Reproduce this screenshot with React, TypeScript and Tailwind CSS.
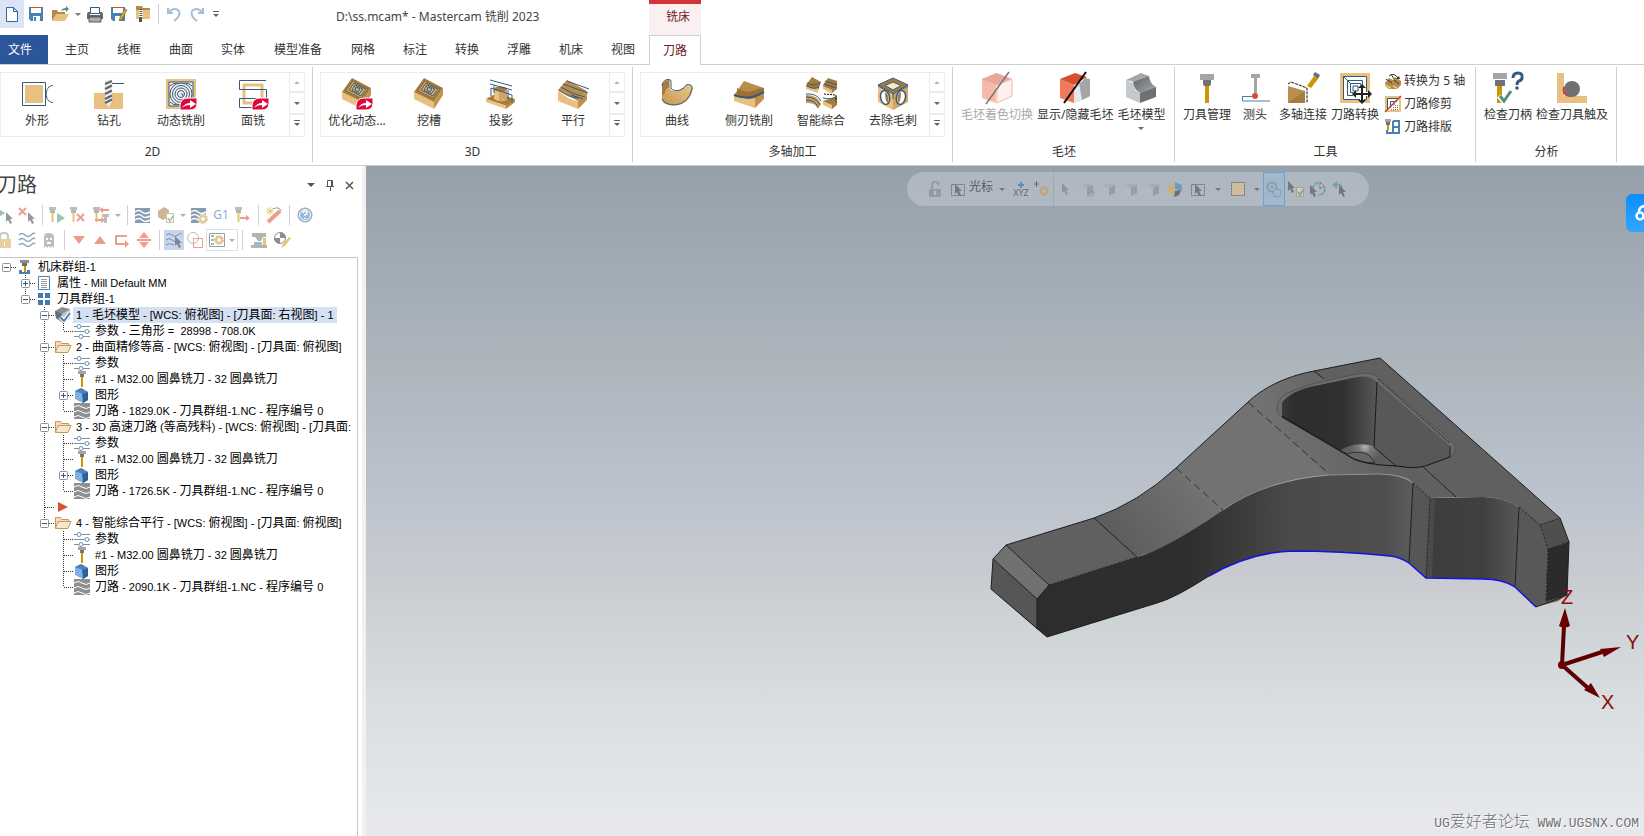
import type { ReactNode } from 'react';
import clsx from 'clsx';

const NAVY = '#34597f';
const TAN = '#e8c080';
const BROWN = '#a67c3d';

interface SvgProps {
  size?: number;
  className?: string;
  children: ReactNode;
}

function Svg({ size = 16, className, children }: SvgProps) {
  return (
    <svg
      width={size}
      height={size}
      viewBox={`0 0 ${size} ${size}`}
      fill="none"
      aria-hidden="true"
      className={clsx('shrink-0 overflow-visible', className)}
    >
      {children}
    </svg>
  );
}

function Caret({ className }: { className?: string }) {
  return (
    <svg width="6" height="3" viewBox="0 0 6 3" aria-hidden="true" className={clsx('shrink-0', className)}>
      <path d="M0 0h6L3 3z" fill="currentColor" />
    </svg>
  );
}

// latin runs are set one size below the CJK ones
function Mixed({ text, latin }: { text: string; latin: string }) {
  const parts = text.split(/([\u4e00-\u9fff]+)/).filter(Boolean);
  return (
    <>
      {parts.map((p, i) => (/[\u4e00-\u9fff]/.test(p) ? p : <span key={i} className={latin}>{p}</span>))}
    </>
  );
}

/* ---------- ribbon icons, 32px ---------- */

const Badge = () => (
  <g>
    <path d="M15 33v-5q1-7 8-7h9v6q-1 6-7 6z" fill="#e0063c" stroke="#fff" strokeWidth="1" />
    <path d="M17 31q3-5 8-5v-3l6 4-6 4v-3q-5 0-8 3z" fill="#fff" />
  </g>
);

const PocketBlock = () => (
  <g>
    <path d="M1 15 21 25v7L1 22z" fill={TAN} />
    <path d="M30 11v7l-9 14v-7z" fill="#c0924c" />
    <path d="M11 1 30 11 21 25 1 15z" fill={BROWN} />
    <path d="M12 4 27 12 20 21 5 14z" fill="#d9b06c" stroke="#8a6631" />
    <path d="M13 6 25 12 20 19 8 13zM14 8l8 4-4 5-7-4zM15 10l4 2-2 3-3-2z" stroke={NAVY} />
  </g>
);

const ICONS: Record<string, ReactNode> = {
  contour: (
    <>
      <path d="M1.500 5.500h23v23h-23z" stroke={NAVY} />
      <path d="M4 8h18v18H4z" fill={TAN} />
      <path d="M32 8.500c-9 0-9 17 0 17" stroke={NAVY} />
    </>
  ),
  drill: (
    <>
      <path d="M1 16h29v16H1z" fill={TAN} />
      <path d="M12 3h7v22l-3.500 5-3.500-5z" fill="#e9eaea" />
      <path d="M12 7l7-3M12 12l7-3.500M12 17l7-3.500M12 22l7-3.500M12 26l7-3.500" stroke="#5f6468" strokeWidth="2" />
      <path d="M19 6.500h12" stroke={NAVY} />
    </>
  ),
  dynamic: (
    <>
      <path d="M1 2h30v30H1z" fill={TAN} />
      <path d="M4 5h24v24H4z" fill="#f3f0ea" stroke={NAVY} />
      <g stroke={NAVY}>
        <circle cx="16" cy="17" r="11" />
        <circle cx="16" cy="17" r="8.500" />
        <circle cx="16" cy="17" r="6" />
        <circle cx="16" cy="17" r="3.500" />
        <path d="M16 17q2-1 2 2M5 9q3-3 7-3M27 9q-3-3-7-3M5 25q3 3 7 3" />
      </g>
      <Badge />
    </>
  ),
  face: (
    <>
      <path d="M7 8h18v18H7z" stroke={TAN} strokeWidth="3" />
      <path d="M29 3.500H2.500v9h27v9H2.500v9H16" stroke={NAVY} />
      <Badge />
    </>
  ),
  optirough: (
    <>
      <PocketBlock />
      <Badge />
    </>
  ),
  pocket: <PocketBlock />,
  project: (
    <>
      <path d="M1 22 12 16l18 6-8 7z" fill={BROWN} />
      <path d="M1 22l20 7v3L1 25z" fill={TAN} />
      <path d="M21 29l9-7v3l-9 7z" fill="#b88a45" />
      <path d="M9 13v9q6 4 13 1V13z" fill={TAN} />
      <path d="M14 13v11l8-1V13z" fill="#d0a562" />
      <ellipse cx="15.500" cy="12" rx="6.500" ry="2.500" fill={BROWN} />
      <path d="M5 3l22 6M5 7l22 6M6 11l21 7v8M6 11v8M9 9v7M23 13v9" stroke={NAVY} />
    </>
  ),
  parallel: (
    <>
      <path d="M1 13 10 3l20 11-9 10z" fill="#b98d4a" />
      <path d="M1 13q11 11 20 11v8L1 24z" fill={TAN} />
      <path d="M30 14v9l-9 9v-8z" fill="#c0924c" />
      <path d="M10 4l22 8M6 7l25 9M4 10q12 8 24 10M2 13q10 8 20 8M14 18l12 4" stroke={NAVY} />
    </>
  ),
  curve: (
    <>
      <path d="M1 9q1-6 8-6v8q2 5 10 2 6-3 7-5 6-2 6 4-3 15-17 16-14 1-14-6z" fill="url(#tanFade)" />
      <path d="M1 9q2-6 7-6v7q-4 2-4 6l-3 3z" fill={BROWN} />
      <path d="M1 9q1-7 7-6.500 2 0 2 2V11q3 4 9 2 5-2 6-5 6-2 6 4-4 15-17 16-10 0-13-6" stroke={NAVY} />
    </>
  ),
  swarf: (
    <>
      <path d="M1 18 11 4l20 7-9 12z" fill="#b98d4a" />
      <path d="M4 11q10 7 21 1l6-1v9q-14 6-27-2z" fill="#9a7135" />
      <path d="M1 18q12 6 21 3v10L1 24z" fill={TAN} />
      <path d="M31 15v7l-9 9V21z" fill="#c0924c" />
      <path d="M1 18q14 6 30-3" stroke={NAVY} strokeWidth="2" />
    </>
  ),
  unified: (
    <>
      <path d="M1 8 7 0l9 5-3 9-12-3zM18 8l5-7 9 3v8l-5 4-9-5z" fill={BROWN} />
      <path d="M1 9q7 4 12 2v5L1 12zM18 9l9 4v4l-9-5z" fill={TAN} />
      <path d="M1 18q12 0 15 9l-3 5q-3-7-12-6z" fill="#c99e5b" />
      <path d="M18 24q7-2 14-5v9l-5 4-9-5z" fill={BROWN} />
      <path d="M18 24l9 4v4l-9-4z" fill={TAN} />
      <path d="M2 6q7 4 13 0M2 9q7 4 12 1M20 4l12 4M19 7l12 4M1 20q10 0 14 8M1 23q9 0 12 7M1 17q11-1 15 7M18 21q8 2 13-1" stroke={NAVY} />
      <path d="M19 17l12 1M31 18v7" stroke="#111" strokeDasharray="2 1" />
    </>
  ),
  deburr: (
    <>
      <path d="M1 8 16 1l15 7-15 8z" fill={BROWN} stroke={NAVY} />
      <path d="M1 9l15 7v17L1 25z" fill={TAN} />
      <path d="M31 9l-15 7v17l15-8z" fill="#d3a65f" />
      <path d="M8 8.500 16 5l8 3.500-8 4.500z" fill="#f5e7cd" stroke={NAVY} />
      <ellipse cx="8" cy="20.500" rx="4.500" ry="7" fill="#fff" stroke={NAVY} strokeWidth="1.500" transform="rotate(-12 8 20)" />
      <ellipse cx="24" cy="20.500" rx="4.500" ry="7" fill="#fff" stroke={NAVY} strokeWidth="1.500" transform="rotate(12 24 20)" />
      <path d="M8 15q5 2 3 11-3-1-3-11zM24 15q-5 2-3 11 3-1 3-11z" fill={BROWN} />
      <path d="M1 9l15 8 15-8M16 17v5" stroke={NAVY} />
    </>
  ),
  stockShade: (
    <>
      <path d="M1 7 15 1v30L1 26z" fill="#f6b9ab" />
      <path d="M1 7 16 1l15 6-15 6z" fill="#e9a69a" />
      <path d="M16 13l15-6v17l-15 7z" fill="#fdf0ed" stroke="#f6b9ab" />
      <path d="M28 0 5 32" stroke="#777" strokeWidth="1.500" />
    </>
  ),
  stockShow: (
    <>
      <path d="M1 7l14 6v18L1 26z" fill="#ef7b5c" />
      <path d="M1 7 16 1l12 4-13 8z" fill="#d5502e" />
      <path d="M15 18v13l16-7V7l-5-1z" fill="#a3a5a7" />
      <path d="M15 18v13l8-3.500V8z" fill="#e7e9ea" />
      <path d="M20 11l11-4v17l-8 4z" fill="#a3a5a7" />
      <path d="M27 0 5 31" stroke="#0b0b0b" strokeWidth="2" />
    </>
  ),
  stockModel: (
    <>
      <path d="M1 8l7 3q1 9 7 10v10L1 25z" fill="#c3c8cc" />
      <path d="M1 8 16 1l8 3-14 6z" fill="#a4a7aa" />
      <path d="M8 10 24 4q1 8 7 11l-15 6q-7-2-8-11z" fill="url(#grayFade)" />
      <path d="M15 21l16-6v10l-16 6z" fill="#6e7173" />
    </>
  ),
  toolManager: (
    <>
      <path d="M9 2h14v6H9z" fill="#a3a5a8" />
      <path d="M12 8h8v4l-1 2h-6l-1-2z" fill="#707274" />
      <path d="M14 14h4v17h-4z" fill="#cd9700" />
    </>
  ),
  probe: (
    <>
      <path d="M12 2h9v4h-3v18h-3V6h-3z" fill="#a3a5a8" />
      <path d="M3 24.500h13M3.500 24v5H31" stroke="#4a80b8" />
      <circle cx="16" cy="24" r="3" fill="#d9502e" />
    </>
  ),
  multiLink: (
    <>
      <path d="M1 14l17 5v12H1z" fill="#b98d4f" />
      <path d="M18 19v12H1z" fill={BROWN} />
      <path d="M1 12l3-2 16 6v15" stroke="#111" strokeDasharray="3 1" />
      <path d="M20 14 27 4l4 3-7 9z" fill="#cd9700" />
      <path d="M26 3l2-3 5 3-2 4z" fill="#6d6f71" />
    </>
  ),
  transform: (
    <>
      <path d="M1 1h30v30H1z" fill={TAN} />
      <path d="M4 4h24v24H4z" fill="#fff" />
      <path d="M4.500 4.500h23v23h-23zM8.500 8.500h15v15h-15zM11.500 11.500h10v9h-10zM14 14h5v5h-5zM4 4l8 8" stroke={NAVY} />
      <path d="M23 13v18M14 22h18" stroke="#fff" strokeWidth="4" />
      <path d="M22 15h2v14h-2zM16 21h14v2H16z" fill="#222" />
      <path d="M23 12l4 4h-8zM23 32l4-4h-8zM13 22l4-4v8zM33 22l-4-4v8z" fill="#222" />
    </>
  ),
  checkHolder: (
    <>
      <path d="M1 1h14v6H1z" fill="#a3a5a8" />
      <path d="M3 8h10v6H3z" fill="#707274" />
      <path d="M5 14h5v17H5z" fill="#cd9700" />
      <path d="M7 24l4 5 8-11" stroke="#fff" strokeWidth="5" />
      <path d="M8 24l4 5 7-10" stroke="#4f917b" strokeWidth="3" />
      <path d="M21 6q0-5 5-5t4 5q0 2-3 3-2 1-2 4" stroke={NAVY} strokeWidth="3" />
      <circle cx="25" cy="16" r="1.800" fill={NAVY} />
    </>
  ),
  checkReach: (
    <>
      <path d="M1 1h7v23h23v7H1z" fill={TAN} />
      <path d="M8 15q-2 9 7 9" stroke="#e3342a" strokeWidth="2" />
      <circle cx="16" cy="17" r="8" fill="#6f7072" />
    </>
  ),
};

/* ---------- ribbon ---------- */

const TABS = ['主页', '线框', '曲面', '实体', '模型准备', '网格', '标注', '转换', '浮雕', '机床', '视图'];

const GALLERIES = [
  {
    label: '2D',
    items: [
      { icon: 'contour', text: '外形' },
      { icon: 'drill', text: '钻孔' },
      { icon: 'dynamic', text: '动态铣削' },
      { icon: 'face', text: '面铣' },
    ],
  },
  {
    label: '3D',
    items: [
      { icon: 'optirough', text: '优化动态...' },
      { icon: 'pocket', text: '挖槽' },
      { icon: 'project', text: '投影' },
      { icon: 'parallel', text: '平行' },
    ],
  },
  {
    label: '多轴加工',
    items: [
      { icon: 'curve', text: '曲线' },
      { icon: 'swarf', text: '侧刃铣削' },
      { icon: 'unified', text: '智能綜合' },
      { icon: 'deburr', text: '去除毛刺' },
    ],
  },
];

function Group({ label, className, children }: { label: string; className?: string; children: ReactNode }) {
  return (
    <section className={clsx('relative flex flex-col pt-[7px]', className)}>
      <div className="flex h-[65px]">{children}</div>
      <div className="mt-[6px] text-center leading-[18px]">{label}</div>
      <span className="absolute right-0 top-[2px] h-[95px] w-px bg-[#cfcfcf]" />
    </section>
  );
}

function Gallery({ items }: { items: { icon: string; text: string }[] }) {
  return (
    <div className="flex w-[305px] border border-[#ececec]">
      <div className="flex flex-1">
        {items.map(item => (
          <button key={item.icon} type="button" className="flex w-[72px] flex-col items-center pt-1">
            <Svg size={32}>{ICONS[item.icon]}</Svg>
            <span className="mt-1 whitespace-nowrap leading-4">{item.text}</span>
          </button>
        ))}
      </div>
      <div className="flex w-[15px] flex-col divide-y-2 divide-[#ececec] border-l border-[#ececec] text-[#666]">
        <button type="button" aria-label="Scroll up" className="flex h-5 items-center justify-center text-[#bbb]">
          <Caret className="rotate-180" />
        </button>
        <button type="button" aria-label="Scroll down" className="flex h-[22px] items-center justify-center">
          <Caret />
        </button>
        <button type="button" aria-label="More" className="flex flex-1 flex-col items-center gap-[2px] pt-[5px]">
          <span className="h-px w-[6px] bg-current" />
          <Caret />
        </button>
      </div>
    </div>
  );
}

interface BigButtonProps {
  icon: string;
  text: string;
  disabled?: boolean;
  menu?: boolean;
  className?: string;
}

function BigButton({ icon, text, disabled, menu, className }: BigButtonProps) {
  return (
    <button
      type="button"
      disabled={disabled}
      className={clsx('flex shrink-0 flex-col items-center px-[2px]', disabled && 'text-[#a8a8a8]', className)}
    >
      <Svg size={32}>{ICONS[icon]}</Svg>
      <span className="mt-[3px] whitespace-nowrap leading-4">{text}</span>
      {menu && <Caret className="mt-1 text-[#666]" />}
    </button>
  );
}

function SmallButton({ text, children }: { text: string; children: ReactNode }) {
  return (
    <button type="button" className="flex h-[23px] shrink-0 items-center gap-[3px] whitespace-nowrap">
      <Svg>{children}</Svg>
      {text}
    </button>
  );
}

function TitleBar() {
  return (
    <header className="flex h-[35px]">
      <div className="flex h-7 w-[336px] items-center">
        <button type="button" aria-label="New" className="flex h-7 w-6 items-center justify-center bg-[#d9e4f4]">
          <Svg><path d="M2.500 1.500h7l4 4v10h-11zM9.500 1.500v4h4" fill="#fff" stroke="#34659b" /></Svg>
        </button>
        <button type="button" aria-label="Save" className="flex w-6 justify-center">
          <Svg>
            <path d="M1 1h14v14H3l-2-2z" fill="#4a7fb8" />
            <path d="M3 2h10v5H3z" fill="#fff" />
            <path d="M3 1h10v1H3z" fill="#d9502e" />
            <path d="M5 10h7v5H5z" fill="#fff" />
            <path d="M6 11h2v4H6z" fill="#4a7fb8" />
          </Svg>
        </button>
        <button type="button" aria-label="Open" className="flex w-6 justify-center">
          <Svg>
            <path d="M0 15V4h5l1 2h7v3H4z" fill="#b58a48" />
            <path d="M0 15l4-7h13l-4 7z" fill={TAN} />
            <path d="M9 5q1-3 5-3V0l3 3-3 3V4q-3 0-5 1z" fill="#4f917b" />
          </Svg>
        </button>
        <button type="button" aria-label="Open menu" className="flex w-[11px] justify-center text-[#777]"><Caret /></button>
        <button type="button" aria-label="Print" className="flex w-6 justify-center">
          <Svg>
            <path d="M3.500 1.500h9v6h-9z" fill="#fff" stroke={NAVY} />
            <path d="M1 6h2v3h10V6h2l1 2v5H0V8z" fill="#66696c" />
            <path d="M2 11h12v5H2z" fill="#a9acae" stroke="#55585b" />
          </Svg>
        </button>
        <button type="button" aria-label="Save as" className="flex w-6 justify-center">
          <Svg>
            <path d="M0 1h14v14H2l-2-2z" fill="#4a7fb8" />
            <path d="M2 2h10v5H2z" fill="#fff" />
            <path d="M2 1h10v1H2z" fill="#d9502e" />
            <path d="M4 10h5v5H4z" fill="#fff" />
            <path d="M8 15l1-4 5-8 2 1-5 9z" fill="#e6a41f" stroke="#7a5410" strokeWidth="0.500" />
          </Svg>
        </button>
        <button type="button" aria-label="Zip2Go" className="flex w-6 justify-center">
          <Svg>
            <path d="M1 0h6l1 2h7v3H1z" fill="#b58a48" />
            <path d="M1 4h14v9H1z" fill={TAN} />
            <path d="M4 4h4v8H4z" fill="#fff" />
            <path d="M6 3v9" stroke="#555" strokeWidth="3" strokeDasharray="1 1" />
            <path d="M4 11h3v5H4z" fill="#555" />
          </Svg>
        </button>
        <span className="mx-[3px] h-5 w-px bg-[#cfcfcf]" />
        <button type="button" aria-label="Undo" className="flex w-6 justify-center">
          <Svg><path d="M2 2v5h5M2 7q6-7 11-2 2 5-5 10" stroke="#a5bfdb" strokeWidth="2" /></Svg>
        </button>
        <button type="button" aria-label="Redo" className="flex w-[22px] justify-center">
          <Svg><path d="M14 2v5H9M14 7Q8 0 3 5q-2 5 5 10" stroke="#a5bfdb" strokeWidth="2" /></Svg>
        </button>
        <button type="button" aria-label="Customize" className="flex w-4 flex-col items-center gap-[2px] text-[#666]">
          <span className="h-px w-[6px] bg-current" />
          <Caret />
        </button>
      </div>
      <h1 className="w-[313px] pt-2 leading-[18px] text-[#444]">D:\ss.mcam* - Mastercam 铣削 2023</h1>
      <div className="w-[52px] border-t-4 border-[#d13438] bg-[#fbf0f1] pl-[6px] pt-1 text-center leading-[18px] text-[#6b2229]">
        铣床
      </div>
    </header>
  );
}

function TabStrip() {
  return (
    <nav className="flex h-[30px] border-b border-[#cfcfcf]">
      <button type="button" className="mr-[3px] w-12 bg-[#2b579a] pr-2 text-white">文件</button>
      {TABS.map(tab => (
        <button key={tab} type="button" className={clsx('whitespace-nowrap', tab.length > 2 ? 'w-[78px]' : 'w-[52px]')}>
          {tab}
        </button>
      ))}
      <button
        type="button"
        aria-current="page"
        className="-mb-px w-[52px] border border-b-0 border-[#cfcfcf] bg-white text-[#6b2229]"
      >
        刀路
      </button>
    </nav>
  );
}

function Ribbon() {
  return (
    <div className="flex h-[101px] border-b border-[#cfcfcf]">
      {GALLERIES.map((g, i) => (
        <Group key={g.label} label={g.label} className={i === 0 ? 'pr-2' : 'pl-[7px] pr-2'}>
          <Gallery items={g.items} />
        </Group>
      ))}
      <Group label="毛坯" className="w-[222px] px-[6px]">
        <BigButton icon="stockShade" text="毛坯着色切换" disabled />
        <BigButton icon="stockShow" text="显示/隐藏毛坯" />
        <BigButton icon="stockModel" text="毛坯模型" menu />
      </Group>
      <Group label="工具" className="w-[301px] px-[6px]">
        <BigButton icon="toolManager" text="刀具管理" />
        <BigButton icon="probe" text="测头" className="w-11" />
        <BigButton icon="multiLink" text="多轴连接" />
        <BigButton icon="transform" text="刀路转换" />
        <div className="-mt-[3px] flex flex-col pl-1">
          <SmallButton text="转换为 5 轴">
            <path d="M0 10l4-5 4 2 2-3 6 4v4l-4 4H4l-4-3z" fill="#b58a48" />
            <path d="M0 11l6 3v2l-6-3zM8 12l4 2v2l-4-2z" fill={TAN} />
            <path d="M4 3q5-4 9 2M1 6l6 4M9 7l5 4M6 1l3 5" stroke="#333" />
            <path d="M15 6l-4 0 3-3z" fill="#333" />
          </SmallButton>
          <SmallButton text="刀路修剪">
            <path d="M0 0h16v16H0z" fill={TAN} />
            <path d="M2 2h12v12H2z" fill="#fff" />
            <path d="M2.500 14V2.500H14M5.500 12V5.500H12M8 9V8h2" stroke={NAVY} />
            <path d="M6 13.500h8M8 11.500h6M10 9.500h4" stroke="#777" strokeDasharray="1 1" />
            <path d="M0 16 16 0" stroke="#c8402e" strokeWidth="1.500" />
          </SmallButton>
          <SmallButton text="刀路排版">
            <path d="M0 0h6v3H0z" fill="#a3a5a8" />
            <path d="M1 3h4v3H1z" fill="#707274" />
            <path d="M2 6h2v5H2z" fill="#cd9700" />
            <path d="M8 2h6v12H2v-3M8 2v12M8 8h6" stroke="#4a7fb8" strokeWidth="2" />
          </SmallButton>
        </div>
      </Group>
      <Group label="分析" className="w-[141px] px-[6px]">
        <BigButton icon="checkHolder" text="检查刀柄" />
        <BigButton icon="checkReach" text="检查刀具触及" />
      </Group>
    </div>
  );
}

/* ---------- toolpath manager ---------- */

const Waves = ({ color }: { color: string }) => (
  <path
    d="M0 3q3-3 6 0t6 0 4-1M0 8q3-3 6 0t6 0 4-1M0 13q3-3 6 0t6 0 4-1"
    stroke={color}
    strokeWidth="1.500"
  />
);

const MiniTool = () => (
  <>
    <path d="M0 0h7v3H0z" fill="#888" />
    <path d="M1 3h5v3H1z" fill="#777" />
    <path d="M2.500 6h2v9h-2z" fill="#cd9700" />
  </>
);

const Pointer = ({ x, y }: { x: number; y: number }) => (
  <path transform={`translate(${x} ${y})`} d="M0 0v10l2-2 2 4 2-1-2-4h3z" fill="#444" />
);

const Gear = ({ x, y }: { x: number; y: number }) => (
  <g transform={`translate(${x} ${y})`} stroke="#cf9838">
    <circle r="3" strokeWidth="2" />
    <circle r="4.500" strokeDasharray="2 1.500" />
  </g>
);

interface ToolButtonProps {
  label: string;
  className?: string;
  faint?: boolean;
  children: ReactNode;
}

function ToolButton({ label, className, faint, children }: ToolButtonProps) {
  return (
    <button
      type="button"
      aria-label={label}
      className={clsx('flex h-5 shrink-0 items-center justify-center', className ?? 'w-[22px]')}
    >
      <Svg className={faint ? 'opacity-30' : 'opacity-55'}>{children}</Svg>
    </button>
  );
}

const Sep = () => <span className="mx-1 h-5 w-px shrink-0 bg-[#d0d0d0]" />;

const MenuArrow = () => (
  <button type="button" aria-label="Menu" className="flex h-5 w-[10px] shrink-0 items-center justify-center text-[#b0b0b0]">
    <Caret />
  </button>
);

function ManagerToolbar() {
  return (
    <div className="flex flex-col gap-1">
      <div className="-ml-[6px] flex items-center">
        <ToolButton label="Select all">
          <path d="M2 2l6 4-6 4z" fill="#4f917b" />
          <Pointer x={9} y={5} />
        </ToolButton>
        <ToolButton label="Select invalid">
          <path d="M0 1l7 7M7 1 0 8" stroke="#d9502e" strokeWidth="2" />
          <Pointer x={9} y={5} />
        </ToolButton>
        <Sep />
        <ToolButton label="Regenerate all" className="w-5">
          <MiniTool />
          <path d="M8 6l8 5-8 5z" fill="#4f917b" />
        </ToolButton>
        <ToolButton label="Regenerate invalid">
          <MiniTool />
          <path d="M7 7l7 7M14 7l-7 7" stroke="#d9502e" strokeWidth="2" />
        </ToolButton>
        <ToolButton label="Renumber" className="w-6">
          <MiniTool />
          <path d="M9 7h7v3H9zM11 10h3v6h-3z" fill="#888" />
          <path d="M16 3H9M2 13h8" stroke="#d9502e" strokeWidth="2" />
          <path d="M6 3l4-3v6zM12 13l-4-3v6z" fill="#d9502e" />
        </ToolButton>
        <MenuArrow />
        <Sep />
        <ToolButton label="Backplot">
          <path d="M0 1h15v15H0z" fill="#244b74" />
          <path d="M0 5q4-3 7 0t8 0M0 9q4-3 7 0t8 0M0 13q4-3 7 0t8 0" stroke="#fff" strokeWidth="1.500" />
        </ToolButton>
        <ToolButton label="Verify" className="w-6">
          <path d="M0 4l6-4 5 3v7l-6 3-5-3z" fill={BROWN} />
          <path d="M8.500 6.500h7v9h-7z" fill="#fff" stroke="#b58a48" />
          <path d="M10 11l2 3 3-5" stroke="#4f917b" strokeWidth="1.500" />
        </ToolButton>
        <MenuArrow />
        <ToolButton label="Simulator options">
          <path d="M0 1h15v15H0z" fill="#244b74" />
          <path d="M0 5q4-3 7 0t8 0M0 9q4-3 7 0t8 0M0 13q4-3 7 0t8 0" stroke="#fff" strokeWidth="1.500" />
          <circle cx="12" cy="12" r="5" fill="#fff" />
          <Gear x={12} y={12} />
        </ToolButton>
        <button type="button" className="w-[22px] text-center leading-5 text-[#8cadd0]">G1</button>
        <ToolButton label="High feed">
          <MiniTool />
          <path d="M5 11h7" stroke="#d9502e" strokeWidth="2" />
          <path d="M15 11l-4-3v6z" fill="#d9502e" />
        </ToolButton>
        <Sep />
        <ToolButton label="Wizard">
          <path d="M2 15 14 4" stroke="#d9502e" strokeWidth="4" />
          <path d="M7 2q6-3 8 2" stroke="#444" />
          <path d="M4 0v8M0 4h8M1 1l6 6M7 1 1 7" stroke="#cd9700" />
        </ToolButton>
        <Sep />
        <ToolButton label="Help">
          <circle cx="8" cy="8" r="7" fill="#4a7fb8" stroke="#34597f" />
          <circle cx="8" cy="8" r="5.500" stroke="#fff" />
          <path d="M6 6q0-2 2-2t2 2q0 1-2 2v1M8 10.500V12" stroke="#fff" strokeWidth="1.500" />
        </ToolButton>
      </div>
      <div className="-ml-[6px] flex items-center">
        <ToolButton label="Lock">
          <path d="M3 7V4q0-3 4-3t4 3v3" stroke="#999" strokeWidth="2" />
          <path d="M1 7h13v9H1z" fill="#d8a855" />
          <path d="M7 10h1v4H7z" fill="#fff" />
        </ToolButton>
        <ToolButton label="Toggle display"><Waves color="#34597f" /></ToolButton>
        <ToolButton label="Ghost">
          <path d="M3 16V5q0-4 5-4t5 4v11l-2-2-1 2-2-2-2 2-1-2z" fill="#888" />
          <path d="M5 6h2v2H5zM9 6h2v2H9zM6 10h4v2H6z" fill="#fff" />
        </ToolButton>
        <Sep />
        <ToolButton label="Move down" className="w-5"><path d="M2 4h12l-6 8z" fill="#d9502e" /></ToolButton>
        <ToolButton label="Move up"><path d="M2 12h12L8 4z" fill="#d9502e" /></ToolButton>
        <ToolButton label="Insert arrow">
          <path d="M13 4H2v8h9" stroke="#d9502e" strokeWidth="2" />
          <path d="M15 12l-4-4v8z" fill="#d9502e" />
        </ToolButton>
        <ToolButton label="Scroll to arrow">
          <path d="M3 6l5-6 5 6zM3 10l5 6 5-6zM1 7h14v2H1z" fill="#d9502e" />
        </ToolButton>
        <Sep />
        <ToolButton label="Only display selected" className="w-5 bg-[#c8d6ec]">
          <path d="M0 3q3-3 6 0t6 0 4-1M0 8q3-3 6 0t4 0M0 13q3-3 8 0" stroke="#34597f" />
          <Pointer x={9} y={4} />
        </ToolButton>
        <ToolButton label="Geometry only">
          <circle cx="6" cy="6" r="5.500" stroke="#888" />
          <path d="M6.500 6.500h9v9h-9z" stroke="#d9502e" />
        </ToolButton>
        <div className="flex w-8 items-center border border-[#e0e0e0]">
          <button type="button" aria-label="Display options" className="flex h-[18px] w-5 items-center justify-center">
            <Svg className="opacity-60">
              <path d="M0.500 1.500h15v13H.5z" stroke="#34659b" />
              <path d="M2 4h3M2 8h3M2 12h3" stroke="#4f917b" strokeWidth="2" />
              <Gear x={10} y={8} />
            </Svg>
          </button>
          <MenuArrow />
        </div>
        <Sep />
        <ToolButton label="Machine" className="w-6">
          <path d="M1 1h14v4h-3l-2 4H7L4 5H1zM0 13h16v3H0z" fill="#777" />
          <path d="M3 10h8v3H3z" fill="#4a7fb8" />
          <path d="M12 6h3v7h-3z" fill="#cd9700" />
        </ToolButton>
        <ToolButton label="Edit">
          <circle cx="6" cy="6" r="5.500" fill="#fff" stroke="#333" />
          <path d="M6 0a6 6 0 0 1 6 6H6zM6 12a6 6 0 0 1-6-6h6z" fill="#333" />
          <path d="M7 16l2-4 6-7 2 1-6 8z" fill="#cd9700" />
        </ToolButton>
      </div>
    </div>
  );
}

const TREE_ICONS: Record<string, ReactNode> = {
  machine: (
    <>
      <path d="M3 1h9v3H3z" fill="#8c8f91" />
      <path d="M5 4h5v3H5z" fill="#6b6d6f" />
      <path d="M7 7h2v6H7z" fill="#cd9700" />
      <path d="M2 11h3v2h5v-2h3v4H2z" fill="#4a7fb8" />
    </>
  ),
  props: (
    <>
      <path d="M2.500 1.500h11v13h-11z" stroke="#4a7fb8" fill="#fff" />
      <path d="M5 4.500h6M5 6.500h6M5 8.500h6M5 10.500h6M5 12.500h6" stroke="#9a9a9a" />
    </>
  ),
  group: <path d="M2 2h5v5H2zM9 2h5v5H9zM2 9h5v5H2zM9 9h5v5H9z" fill="#3f78b5" />,
  stock: (
    <>
      <path d="M0 4 7 0l8 2v9l-7 5-7-5z" fill="#8b8e90" />
      <path d="M0 4l7 3v8l-6-4z" fill="#6a6d6f" />
      <path d="M7 7l8-5v9l-7 5z" fill="#c4c7c9" />
      <path d="M5 10l4 4 6-8" stroke="#fff" strokeWidth="4" />
      <path d="M5 10l4 4 6-8" stroke="#4a7fb8" strokeWidth="2" />
    </>
  ),
  params: (
    <>
      <path d="M0 3.500h16M0 8.500h16M0 13.500h16" stroke="#8a8d90" />
      <circle cx="5" cy="3.500" r="2" fill="#fff" stroke="#5d93c9" />
      <circle cx="13" cy="8.500" r="2" fill="#fff" stroke="#5d93c9" />
      <circle cx="7" cy="13.500" r="2" fill="#fff" stroke="#5d93c9" />
    </>
  ),
  folder: (
    <>
      <path d="M0.500 13.500v-11h5l1 2h7v3" fill="#f1dfc0" stroke="#c09a5c" />
      <path d="M.5 13.500l2.500-7h13l-3 7z" fill="#f5e6cc" stroke="#c09a5c" />
    </>
  ),
  tool: (
    <>
      <path d="M4 0h8v3H4z" fill="#a3a5a8" />
      <path d="M6 3h4v3H6z" fill="#707274" />
      <path d="M7 6h2v10H7z" fill="#cd9700" />
    </>
  ),
  geometry: (
    <>
      <path d="M1 4l6-3 7 4v8l-5 3-8-4z" fill="#7fb0de" />
      <path d="M8 6l6-1v8l-5 3z" fill="#2d5f96" />
      <path d="M1 4l6-3 7 4-5 2z" fill="#4a82bc" />
    </>
  ),
  path: (
    <>
      <path d="M0 0h16v16H0z" fill="#8f8f8f" />
      <path d="M0 4q4-3 8 0t8 0M0 9q4-3 8 0t8 0M0 14q4-3 8 0t8 0" stroke="#fff" />
    </>
  ),
  insert: <path d="M3 3l10 5-10 5z" fill="#d9502e" />,
};

// one guide character per indent column:
// | line, T branch, L last branch, + / - boxes, m minus box on a last branch, f minus box at the root
const TREE: { guide: string; icon: string; text: string; selected?: boolean }[] = [
  { guide: 'f', icon: 'machine', text: '机床群组-1' },
  { guide: ' +', icon: 'props', text: '属性 - Mill Default MM' },
  { guide: ' m', icon: 'group', text: '刀具群组-1' },
  { guide: '  -', icon: 'stock', text: '1 - 毛坯模型 - [WCS: 俯视图] - [刀具面: 右视图] - 1', selected: true },
  { guide: '  |L', icon: 'params', text: '参数 - 三角形 =  28998 - 708.0K' },
  { guide: '  -', icon: 'folder', text: '2 - 曲面精修等高 - [WCS: 俯视图] - [刀具面: 俯视图]' },
  { guide: '  |T', icon: 'params', text: '参数' },
  { guide: '  |T', icon: 'tool', text: '#1 - M32.00 圆鼻铣刀 - 32 圆鼻铣刀' },
  { guide: '  |+', icon: 'geometry', text: '图形' },
  { guide: '  |L', icon: 'path', text: '刀路 - 1829.0K - 刀具群组-1.NC - 程序编号 0' },
  { guide: '  -', icon: 'folder', text: '3 - 3D 高速刀路 (等高残料) - [WCS: 俯视图] - [刀具面:' },
  { guide: '  |T', icon: 'params', text: '参数' },
  { guide: '  |T', icon: 'tool', text: '#1 - M32.00 圆鼻铣刀 - 32 圆鼻铣刀' },
  { guide: '  |+', icon: 'geometry', text: '图形' },
  { guide: '  |L', icon: 'path', text: '刀路 - 1726.5K - 刀具群组-1.NC - 程序编号 0' },
  { guide: '  T', icon: 'insert', text: '' },
  { guide: '  m', icon: 'folder', text: '4 - 智能综合平行 - [WCS: 俯视图] - [刀具面: 俯视图]' },
  { guide: '   T', icon: 'params', text: '参数' },
  { guide: '   T', icon: 'tool', text: '#1 - M32.00 圆鼻铣刀 - 32 圆鼻铣刀' },
  { guide: '   T', icon: 'geometry', text: '图形' },
  { guide: '   L', icon: 'path', text: '刀路 - 2090.1K - 刀具群组-1.NC - 程序编号 0' },
];

function Guide({ kind }: { kind: string }) {
  const up = '|TL+-m'.includes(kind);
  const down = '|T+-'.includes(kind);
  const box = '+-mf'.includes(kind);
  return (
    <svg width="19" height="16" viewBox="0 0 19 16" fill="none" aria-hidden="true" className="shrink-0">
      <g stroke="#333" strokeDasharray="1 1">
        {up && <path d="M9.500 0v8" />}
        {down && <path d="M9.500 8v8" />}
        {kind !== '|' && kind !== ' ' && <path d="M10 8.500h9" />}
      </g>
      {box && <rect x="5.500" y="4.500" width="8" height="8" rx="1" fill="#fff" stroke="#919191" />}
      {box && <path d={kind === '+' ? 'M7 8.500h5M9.500 6v5' : 'M7 8.500h5'} stroke="#34509a" />}
    </svg>
  );
}

function ToolpathTree() {
  return (
    <ul className="mr-[4px] mt-[6px] flex-1 overflow-hidden border-r border-t border-[#c6c6c6] pt-px text-black">
      {TREE.map((row, i) => (
        <li key={i} className="-ml-[3px] flex h-4 items-center">
          {row.guide.split('').map((kind, j) => <Guide key={j} kind={kind} />)}
          <span className="flex w-[19px] shrink-0 pl-px"><Svg>{TREE_ICONS[row.icon]}</Svg></span>
          {row.text && (
            <span className={clsx('h-4 whitespace-pre px-[3px] leading-4', row.selected && 'bg-[#d5e1f2]')}>
              <Mixed text={row.text} latin="font-['Liberation_Sans'] text-[11px]" />
            </span>
          )}
        </li>
      ))}
    </ul>
  );
}

function ToolpathManager() {
  return (
    <aside className="flex w-[362px] shrink-0 flex-col overflow-hidden bg-white">
      <div className="mb-[2px] flex h-[37px] items-center justify-between pr-[5px]">
        <h2 className="-ml-[3px] text-[20px] leading-7 text-[#444]">刀路</h2>
        <div className="flex items-center gap-[3px] text-[#555]">
          <button type="button" aria-label="Panel menu" className="w-4">
            <Svg><path d="M4 6h8l-4 4z" fill="currentColor" /></Svg>
          </button>
          <button type="button" aria-label="Auto hide" className="w-4">
            <Svg><path d="M5.500 9V3.500h5V9M9.500 3v6M4 9.500h8M8.500 10v4" stroke="currentColor" /></Svg>
          </button>
          <button type="button" aria-label="Close" className="w-4">
            <Svg><path d="M5 5l7 7M12 5l-7 7" stroke="currentColor" strokeWidth="1.500" /></Svg>
          </button>
        </div>
      </div>
      <ManagerToolbar />
      <ToolpathTree />
    </aside>
  );
}

/* ---------- graphics window ---------- */

function SelectionBar() {
  const cube = (
    <>
      <path d="M2 5l6-3 6 2v8l-6 3-6-3z" fill="#b9bec4" />
      <path d="M2 5l6-3 6 2-6 3z" fill="#8d939a" />
      <path d="M8 7l6-3v8l-6 3z" fill="#5e646b" />
    </>
  );
  return (
    <div className="absolute right-[275px] top-[6px] flex h-[34px] w-[462px] items-center rounded-full bg-[#c8ced6]/50 pl-4 text-[#555b63]">
      <ToolButton label="Unlock" className="w-6" faint>
        <path d="M5 8V4q0-3 3-3 4 0 4 3" stroke="#555b63" strokeWidth="2" />
        <path d="M2 8h12v8H2z" fill="#555b63" />
        <path d="M7 10h2v4H7z" fill="#c8ced6" />
      </ToolButton>
      <ToolButton label="AutoCursor">
        <path d="M1.500 3.500h13v11h-13z" stroke="#333" strokeDasharray="2 1" />
        <Pointer x={5} y={3} />
      </ToolButton>
      <span className="pb-1">光标</span>
      <span className="flex w-[18px] justify-center text-[#777]"><Caret /></span>
      <button type="button" className="flex w-5 flex-col items-center text-[9px] leading-[9px] text-[#656b73]">
        <svg width="6" height="6" viewBox="0 0 6 6" aria-hidden="true">
          <path d="M2 0h2v2h2v2H4v2H2V4H0V2h2z" fill="#5b8fc0" />
        </svg>
        XYZ
      </button>
      <ToolButton label="Relative">
        <path d="M0 3h5M2.500 0v6" stroke="#333" />
        <Gear x={10} y={10} />
      </ToolButton>
      <span className="h-full w-px bg-[#a0a8b1]" />
      <ToolButton label="Select" faint><Pointer x={5} y={2} /></ToolButton>
      <ToolButton label="Edge" faint>{cube}<circle cx="12" cy="12" r="3" stroke="#555b63" /></ToolButton>
      <ToolButton label="Face" faint>{cube}</ToolButton>
      <ToolButton label="Body" faint>{cube}</ToolButton>
      <ToolButton label="Back" faint>{cube}</ToolButton>
      <ToolButton label="Planes">
        <path d="M1 4l7-3v14l-7-4z" fill="#e0a94f" />
        <path d="M8 1l7 3v6l-7-2z" fill="#3a86cc" />
        <path d="M8 10l6-1-2 5-5 2z" fill="#333" />
      </ToolButton>
      <ToolButton label="Window select" className="w-6">
        <path d="M1.500 3.500h13v11h-13z" stroke="#333" strokeDasharray="2 1" />
        <Pointer x={5} y={3} />
      </ToolButton>
      <span className="flex w-4 justify-center text-[#777]"><Caret /></span>
      <ToolButton label="Window in" className="w-6">
        <path d="M1.500 1.500h13v13h-13z" fill="#e8c080" stroke="#333" strokeDasharray="2 1" />
      </ToolButton>
      <span className="flex w-[13px] justify-center text-[#777]"><Caret /></span>
      <span className="flex h-full items-center border border-[#6ba3d6] bg-[#8fb6da]/40">
        <ToolButton label="Selection options" className="w-5" faint>
          <circle cx="6" cy="6" r="4.500" stroke="#4f5f70" strokeWidth="2" />
          <circle cx="6" cy="6" r="1.500" fill="#4f5f70" />
          <circle cx="11" cy="12" r="4" fill="#9fb8d0" stroke="#4f5f70" />
        </ToolButton>
      </span>
      <ToolButton label="Validate">
        <Pointer x={0} y={0} />
        <path d="M8.500 6.500h7v9h-7z" fill="#dce0d8" stroke="#b58a48" />
        <path d="M10 11l2 3 3-5" stroke="#4f917b" strokeWidth="1.500" />
      </ToolButton>
      <ToolButton label="Invert">
        <path d="M3 8q0-6 6-6M15 7q0 7-7 7" stroke="#4f917b" strokeWidth="2" strokeDasharray="4 1" />
        <Pointer x={0} y={4} />
        <path d="M10 1l5 5h-3l-2 2z" fill="#ddd" stroke="#444" />
      </ToolButton>
      <ToolButton label="Select last">
        <path d="M2 4q7-2 8 3" stroke="#4f917b" strokeWidth="2" />
        <path d="M0 4l5-4v8z" fill="#4f917b" />
        <Pointer x={7} y={4} />
      </ToolButton>
    </div>
  );
}

function Part() {
  return (
    <svg
      width="664"
      height="390"
      viewBox="980 340 664 390"
      fill="none"
      role="img"
      aria-label="Part"
      className="absolute right-0 top-[174px]"
    >
      <defs>
        <linearGradient id="side" gradientUnits="userSpaceOnUse" x1="1040" y1="0" x2="1412" y2="0">
          <stop offset="0" stopColor="#2d2d2d" />
          <stop offset=".4" stopColor="#2e2e2e" />
          <stop offset=".68" stopColor="#4a4a4a" />
          <stop offset=".93" stopColor="#4e4e4e" />
          <stop offset="1" stopColor="#5c5c5c" />
        </linearGradient>
        <linearGradient id="scoop" gradientUnits="userSpaceOnUse" x1="1432" y1="0" x2="1519" y2="0">
          <stop offset="0" stopColor="#3d3d3d" />
          <stop offset=".6" stopColor="#404040" />
          <stop offset="1" stopColor="#585858" />
        </linearGradient>
        <linearGradient id="bend" gradientUnits="userSpaceOnUse" x1="1110" y1="540" x2="1195" y2="480">
          <stop offset="0" stopColor="#5c5c5c" />
          <stop offset="1" stopColor="#727272" />
        </linearGradient>
        <linearGradient id="crown" gradientUnits="userSpaceOnUse" x1="1270" y1="440" x2="1370" y2="400">
          <stop offset="0" stopColor="#727272" />
          <stop offset="1" stopColor="#606060" />
        </linearGradient>
        <linearGradient id="wall" gradientUnits="userSpaceOnUse" x1="1281" y1="0" x2="1377" y2="0">
          <stop offset="0" stopColor="#3a3a3a" />
          <stop offset=".15" stopColor="#2d2d2d" />
          <stop offset=".65" stopColor="#303030" />
          <stop offset="1" stopColor="#585858" />
        </linearGradient>
        <radialGradient id="fillet" gradientUnits="userSpaceOnUse" cx="1365" cy="447" r="16">
          <stop offset="0" stopColor="#b5b5b5" />
          <stop offset=".4" stopColor="#7a7a7a" />
          <stop offset="1" stopColor="#5d5d5d" />
        </radialGradient>
      </defs>

      {/* top faces */}
      <path d="M1006 545 1094 518 1137 557 1049 585z" fill="#606060" />
      <path d="M1094 518Q1138 503 1176 468L1223 510Q1180 540 1161 549L1137 557z" fill="url(#bend)" />
      <path d="M1176 468 1248 402 1330 475Q1270 478 1223 510z" fill="#727272" />
      <path d="M1248 402C1262 389 1283 377 1314 371L1456 497 1430 498 1413 483Q1405 474 1377 474T1330 476z" fill="url(#crown)" />
      <path d="M1314 371 1380 358 1560 518 1540 526 1519 507Q1503 497 1483 497L1456 497z" fill="#606060" />

      {/* left end */}
      <path d="M1006 545 993 559 1037 599 1049 585z" fill="#717171" />
      <path d="M993 559 991 589 1037 629V599z" fill="#565656" />

      {/* sides */}
      <path
        d="M1049 585 1137 557Q1165 550 1223 510 1265 480 1330 475L1377 474Q1402 474 1413 483L1409 563Q1400 557 1390 556 1340 551 1293 551 1250 552 1209 576 1175 598 1157 603L1047 637 1037 629V599z"
        fill="url(#side)"
      />
      <path d="M1413 483 1430 498 1426 578 1409 563z" fill="#565656" />
      <path d="M1430 498 1483 497Q1503 497 1519 507L1515 587Q1503 579 1483 579L1426 578z" fill="url(#scoop)" />
      <path d="M1430 498h5l-3 80h-6z" fill="#4a4a4a" />
      <path d="M1519 507 1540 525 1548 549 1546 602 1536 607 1515 587z" fill="#585858" />
      <path d="M1560 518 1569 542 1548 549 1540 525z" fill="#4f4f4f" />
      <path d="M1569 542 1567 595 1546 602 1548 549z" fill="#2b2b2b" />
      <path d="M1546 602 1567 595 1558 601 1536 607z" fill="#555" />

      {/* pocket */}
      <path
        d="M1277 408Q1278 396 1290 392 1305 385 1330 380L1357 374Q1372 371 1380 379L1451 441Q1460 450 1450 457L1425 466Q1415 469 1397 466 1360 466 1347 455L1282 417Q1277 414 1277 408z"
        fill="#6c6c6c"
        stroke="#444"
        strokeWidth="0.600"
      />
      <path d="M1282 417V403Q1288 393 1310 387L1357 377Q1370 375 1377 382L1374 447 1345 453z" fill="url(#wall)" />
      <path d="M1377 382 1449 445V457L1420 467 1396 466 1374 447z" fill="#585858" />
      <path d="M1341 450Q1355 441 1374 446L1396 466Q1360 466 1347 455z" fill="url(#fillet)" />
      <path d="M1346 454Q1362 450 1369 455L1375 463Q1356 463 1346 454z" fill="#666" stroke="#222" strokeWidth="0.800" />
      <path d="M1282 417 1347 455Q1360 465 1397 466 1415 469 1425 466L1450 457V446" stroke="#151515" />
      <path d="M1282 416 1347 454M1378 379 1450 443" stroke="#1c1c1c" strokeDasharray="2 1" />
      <path d="M1377 382 1374 447 1396 466" stroke="#1a1a1a" />

      {/* edges */}
      <g stroke="#1d1d1d">
        <path d="M1047 637 991 589 993 559 1006 545 1094 518Q1138 503 1176 468L1248 402C1262 389 1283 377 1314 371L1380 358 1560 518 1569 542 1567 595 1536 607" />
        <path d="M1047 637 1157 603Q1175 598 1209 576M1094 518 1137 557M1006 545 1049 585 1037 599V629M993 559 1037 599" />
        <path d="M1314 371 1324 379M1423 467 1456 497M1413 483 1409 563M1519 507 1515 587" />
        <path d="M1049 585 1137 557M1413 483 1430 498 1426 578M1519 507 1540 525 1560 518M1540 525 1548 549 1569 542M1548 549 1546 602" strokeDasharray="3 1" strokeWidth="0.800" />
        <path d="M1176 468 1223 510M1248 402 1328 473" strokeDasharray="8 4" strokeWidth="0.800" />
      </g>
      <path d="M1223 510Q1265 480 1330 475L1377 474Q1402 474 1413 483" stroke="#999" strokeWidth="0.800" />
      <path
        d="M1209 576Q1250 552 1293 551 1340 551 1390 556 1400 557 1409 563L1426 578 1483 579Q1503 579 1515 587L1536 607"
        stroke="#1414dc"
        strokeWidth="1.500"
      />

      {/* axes */}
      <g stroke="#5a0000" strokeWidth="4">
        <path d="M1562 665 1564 626M1562 665 1602 652M1562 665 1588 688" />
      </g>
      <g fill="#6b0000">
        <circle cx="1562" cy="665" r="4" />
        <path d="M1565 608 1570 626Q1564 629 1559 626zM1621 647 1604 657 1600 649zM1600 698 1584 690 1591 683z" />
      </g>
      <g fill="#8e0a0a" fontFamily="Liberation Sans, sans-serif" fontSize="20">
        <text x="1561" y="604">Z</text>
        <text x="1626" y="649">Y</text>
        <text x="1601" y="709">X</text>
      </g>
    </svg>
  );
}

function GraphicsWindow() {
  return (
    <main className="relative flex-1 overflow-hidden bg-[linear-gradient(to_bottom,#95a0aa_0%,#adb6bd_30%,#b8c0ca_45%,#c4c8d1_57%,#c8ccd0_61%,#dae0e1_82%,#e8e9ec_100%)]">
      <SelectionBar />
      <Part />
      <button
        type="button"
        aria-label="Share"
        className="absolute right-0 top-[28px] h-[38px] w-[18px] overflow-hidden rounded-l-md bg-linear-to-b from-[#0a8cff] to-[#2ea8ff]"
      >
        <Svg size={18} className="ml-2">
          <circle cx="6" cy="12" r="3.500" stroke="#fff" strokeWidth="2.500" />
          <path d="M5 8q0-6 7-6" stroke="#fff" strokeWidth="2.500" />
        </Svg>
      </button>
      <p className="absolute bottom-[2px] right-[5px] whitespace-pre text-[16px] font-light leading-5 text-[#6f7275] [text-shadow:1px_1px_0_#fff]">
        <Mixed text="UG爱好者论坛 WWW.UGSNX.COM" latin="font-['Liberation_Mono'] text-[13px]" />
      </p>
    </main>
  );
}

export default function App() {
  return (
    <div className="flex h-screen flex-col overflow-hidden bg-white font-['Noto_Sans','Noto_Sans_CJK_SC',sans-serif] text-[12px] text-[#333]">
      <svg width="0" height="0" className="absolute" aria-hidden="true">
        <defs>
          <linearGradient id="tanFade" x1="0" y1="1" x2="1" y2="0">
            <stop offset="0" stopColor="#c49652" />
            <stop offset="1" stopColor="#efcd94" />
          </linearGradient>
          <linearGradient id="grayFade" x1="0" y1="0" x2="1" y2="1">
            <stop offset="0" stopColor="#5f6264" />
            <stop offset="1" stopColor="#a8abad" />
          </linearGradient>
        </defs>
      </svg>
      <TitleBar />
      <TabStrip />
      <Ribbon />
      <div className="flex min-h-0 flex-1">
        <ToolpathManager />
        <span className="w-1 shrink-0 bg-[#f1f1f2]" />
        <GraphicsWindow />
      </div>
    </div>
  );
}
